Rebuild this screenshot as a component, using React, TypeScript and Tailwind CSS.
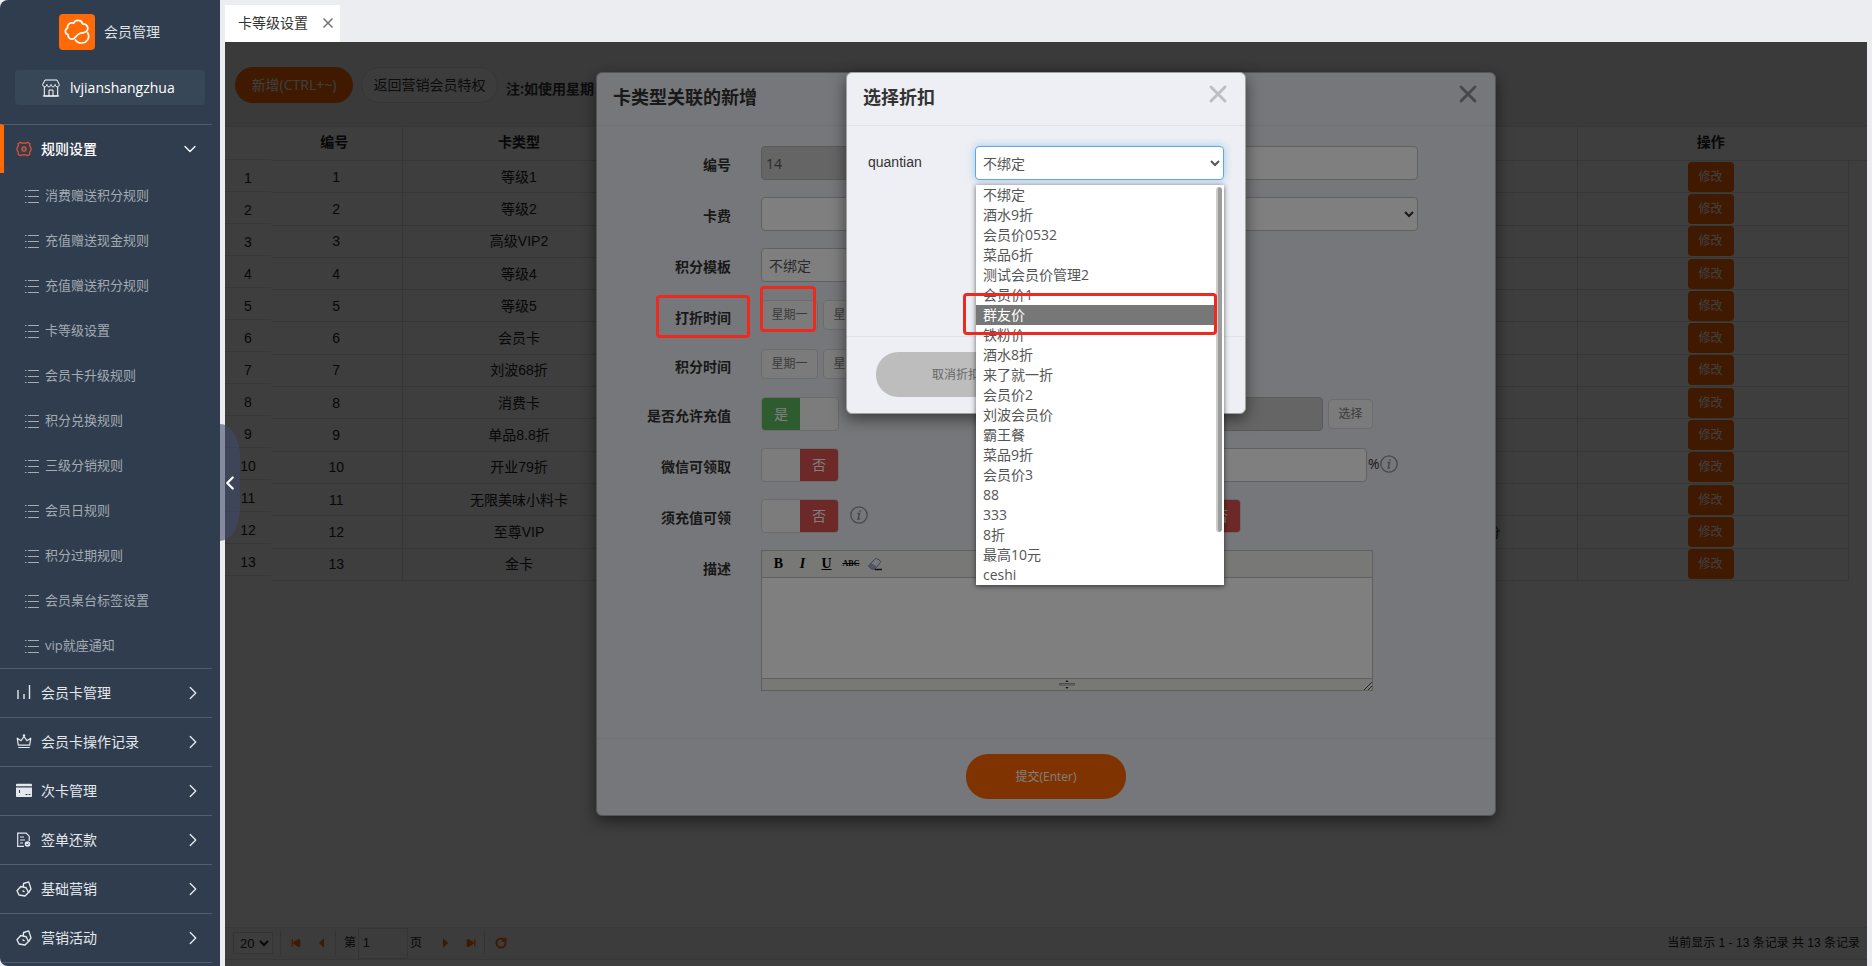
import React from "react";
import { X, ChevronRight, ChevronDown, ChevronLeft, SkipBack, RotateCw } from "lucide-react";

const ui = "font-['Open_Sans','Noto_Sans_CJK_SC',sans-serif]";
const arial = "font-['Liberation_Sans','Noto_Sans_CJK_SC',sans-serif]";

const ruleItems = [
  "消费赠送积分规则",
  "充值赠送现金规则",
  "充值赠送积分规则",
  "卡等级设置",
  "会员卡升级规则",
  "积分兑换规则",
  "三级分销规则",
  "会员日规则",
  "积分过期规则",
  "会员桌台标签设置",
  "vip就座通知",
];

const cardTypes = [
  "等级1",
  "等级2",
  "高级VIP2",
  "等级4",
  "等级5",
  "会员卡",
  "刘波68折",
  "消费卡",
  "单品8.8折",
  "开业79折",
  "无限美味小料卡",
  "至尊VIP",
  "金卡",
];

const discounts = [
  "不绑定",
  "酒水9折",
  "会员价0532",
  "菜品6折",
  "测试会员价管理2",
  "会员价1",
  "群友价",
  "铁粉价",
  "酒水8折",
  "来了就一折",
  "会员价2",
  "刘波会员价",
  "霸王餐",
  "菜品9折",
  "会员价3",
  "88",
  "333",
  "8折",
  "最高10元",
  "ceshi",
];

const weekdays = ["星期一", "星期二", "星期三", "星期四", "星期五", "星期六", "星期日"];

function ListIcon() {
  return (
    <svg width="14" height="14" viewBox="0 0 14 14" fill="none" stroke="currentColor" className="shrink-0">
      <path d="M0 1.5h1.5M0 7.5h1.5M0 13.5h1.5M3 1.5h11M3 7.5h11M3 13.5h11" />
    </svg>
  );
}

function GearIcon() {
  return (
    <svg width="16" height="16" viewBox="0 0 16 16" fill="none" stroke="#e8552d" strokeWidth="1.2" strokeLinejoin="round">
      <path d="M4.300 1.300 6 2.200h4l1.700-.9 2.100 1.500-.1 1.900L15.300 8l-1.600 3.300.1 1.900-2.100 1.500-1.700-.9H6l-1.700.9-2.100-1.500.1-1.900L.7 8l1.600-3.300-.1-1.900z" />
      <circle cx="8" cy="8" r="2.100" />
      <path d="M8 7.500v1" />
    </svg>
  );
}

function BarsIcon() {
  return (
    <svg width="16" height="16" viewBox="0 0 16 16" fill="none" stroke="currentColor" strokeWidth="1.400">
      <path d="M2 5v9M8 9v5M13.500 0v14" />
    </svg>
  );
}

function CrownIcon() {
  return (
    <svg width="16" height="16" viewBox="0 0 16 16" fill="none" stroke="currentColor" strokeWidth="1.200" strokeLinejoin="round">
      <path d="M2.300 13.500h11.400M2.300 11.200 1.200 4.200l3.900 2.500L8 2.500l2.900 4.200 3.900-2.500-1.100 7z" />
      <circle cx="8" cy="1.500" r="1.200" fill="currentColor" stroke="none" />
    </svg>
  );
}

function CardIcon() {
  return (
    <svg width="16" height="16" viewBox="0 0 16 16" fill="currentColor">
      <path d="M0 2C0 1.300.4.800 1 .8h14c.6 0 1 .5 1 1.200v1.200H0zM0 4.500h16V13c0 .6-.4 1-1 1H1c-.6 0-1-.4-1-1z" />
      <path d="M3.500 7v3M9.500 11.500h2M12.500 11.500h2" stroke="#2f3d4e" />
    </svg>
  );
}

function DocIcon() {
  return (
    <svg width="16" height="16" viewBox="0 0 16 16" fill="none" stroke="currentColor" strokeWidth="1.200">
      <path d="M8 14.400H1.700V1.200h8.500l3 3V9M4 5h4M4 8h5M4 11h3" />
      <circle cx="11.500" cy="12" r="2.800" fill="currentColor" stroke="none" />
      <path d="m10.300 12 1 1 1.500-1.700" stroke="#2f3d4e" strokeWidth=".8" />
    </svg>
  );
}

function TagsIcon() {
  return (
    <svg width="16" height="16" viewBox="0 0 16 16" fill="none" stroke="currentColor" strokeWidth="1.400" strokeLinejoin="round">
      <path d="M1 9.800 4.800 5.500l5.400 1.300 2.300 4.700-3.500 3.500-6-1z" />
      <path d="M7.200 5.800 7.600 2.500 12.700.900l2.300 7-2.300 3.600" />
      <path d="m6.500 9.500 2 1.500" />
    </svg>
  );
}

function ShopIcon() {
  return (
    <svg width="18" height="18" viewBox="0 0 18 18" fill="none" stroke="currentColor" strokeWidth="1">
      <path d="M3 1h12l2.300 4.500c0 1.300-.9 2.300-2.100 2.300S13.100 6.800 13.100 5.500c0 1.300-.9 2.300-2.050 2.300S9 6.800 9 5.500c0 1.300-.9 2.300-2.050 2.300S4.900 6.800 4.900 5.500c0 1.300-.9 2.300-2.100 2.300S.7 6.800.7 5.500z" />
      <path d="M2.300 8v9h13.400V8M.8 17h16.400M7 17v-6h4v6" />
    </svg>
  );
}

function Logo() {
  return (
    <span className="flex size-9 items-center justify-center rounded bg-[#ff6a06]">
      <svg width="26" height="26" viewBox="0 0 26 26" fill="none" stroke="#fff" strokeWidth="1.700" strokeLinecap="round" strokeLinejoin="round">
        <path d="M10 19.500C7 21 3.500 19 4.300 15.800.8 15 .300 10.500 3.600 9 2.800 5.500 6.500 3 9.500 4.300 11.500.3 17.500.5 18.500 4.800c4.800-.3 6.800 4.700 4 7.600-1.800 1.900-4.500 1-6.800 2.100-2.500 1.200-3.500 3-5.700 5z" />
        <path d="M23.800 14c2.500 5-1 10-6.300 10-3.200 0-5-1.200-6-3" />
      </svg>
    </span>
  );
}

const groups = [
  { name: "会员卡管理", icon: <BarsIcon /> },
  { name: "会员卡操作记录", icon: <CrownIcon /> },
  { name: "次卡管理", icon: <CardIcon /> },
  { name: "签单还款", icon: <DocIcon /> },
  { name: "基础营销", icon: <TagsIcon /> },
  { name: "营销活动", icon: <TagsIcon /> },
];

function Sidebar() {
  return (
    <aside className={`${ui} flex w-[220px] shrink-0 flex-col overflow-hidden rounded-l-lg bg-[#2f3d4e] text-sm text-[#e4e8ec]`}>
      <div className="flex h-[63px] shrink-0 items-center gap-[9px] pl-[59px]">
        <Logo />
        <span className="text-[#dfe3e8]">会员管理</span>
      </div>
      <button className="mx-[15px] mt-[7px] mb-[19px] flex h-[35px] shrink-0 items-center gap-[10px] rounded-sm bg-[#384757] pl-[27px] text-white">
        <ShopIcon />
        lvjianshangzhua
      </button>
      <nav className="flex flex-col">
        <a href="#rules" className="mr-2 flex h-[49px] items-center border-t border-l-4 border-t-[#4d5f70] border-l-[#ff6a06] pl-3 font-medium text-white">
          <GearIcon />
          <span className="ml-[9px] flex-1">规则设置</span>
          <ChevronDown size={20} strokeWidth={1.5} className="mr-3" />
        </a>
        {ruleItems.map((item) => (
          <a key={item} href="#item" className="flex h-[45px] items-center gap-[6px] pl-[25px] text-[13px] text-[#a3abb3]">
            <ListIcon />
            {item}
          </a>
        ))}
        {groups.map((g) => (
          <a key={g.name} href="#group" className="mr-2 flex h-[49px] items-center border-t border-[#4d5f70] pl-4">
            {g.icon}
            <span className="ml-[9px] flex-1">{g.name}</span>
            <ChevronRight size={22} strokeWidth={1.5} className="mr-2" />
          </a>
        ))}
        <div className="mr-2 border-t border-[#4d5f70]" />
      </nav>
    </aside>
  );
}

function CardTable() {
  return (
    <div className="flex items-start">
      <div className="w-[46px] shrink-0 text-center">
        <div className="h-[34px] border-y border-[#dadada]" />
        {cardTypes.map((_, i) => (
          <div key={i} className="h-8 border-b border-[#dadada] pt-[6px] leading-[24px]">
            {i + 1}
          </div>
        ))}
      </div>
      <table className="h-[455px] flex-1 table-fixed border-collapse text-center">
        <colgroup>
          <col className="w-[131px]" />
          <col className="w-[234px]" />
          <col />
          <col className="w-[271px]" />
          <col className="w-[19px]" />
        </colgroup>
        <thead>
          <tr className="h-[34px] border-y border-[#dadada]">
            <th className="border-r border-[#dadada] pr-1 pb-1">编号</th>
            <th className="border-r border-[#dadada] pb-1">卡类型</th>
            <th className="border-r border-[#dadada]" />
            <th className="pr-1 pb-1">操作</th>
            <th />
          </tr>
        </thead>
        <tbody>
          {cardTypes.map((name, i) => (
            <tr key={name}>
              <td className="border-r border-b border-[#dadada]">{i + 1}</td>
              <td className="border-r border-b border-[#dadada]">{name}</td>
              <td className="border-r border-b border-[#dadada] pr-[76px] text-right">{i === 11 ? "积分" : ""}</td>
              <td className="border-r border-b border-[#dadada] pr-1">
                <button className="mx-auto block h-[30px] w-[46px] rounded-sm bg-[#ff6600] text-xs text-white">修改</button>
              </td>
              <td />
            </tr>
          ))}
        </tbody>
      </table>
    </div>
  );
}

function Pager() {
  const sep = "h-6 w-px bg-[#d0d0d0]";
  const tri = "size-[10px] fill-[#ff6600] text-[#ff6600]";
  return (
    <div className="mb-[6px] flex h-[33px] items-center border-y border-[#dedede] bg-[#f0f0f0] pr-[7px] pb-px pl-2 text-xs">
      <select aria-label="每页条数" className="h-[22px] w-10 rounded-none border border-[#d0d0d0] bg-[#f6f6f6] pl-[2px] text-[13px] leading-none">
        <option>20</option>
      </select>
      <span className={`${sep} ml-[7px]`} />
      <button aria-label="首页" className="ml-[10px]"><SkipBack className={tri} strokeWidth={3} /></button>
      <button aria-label="上一页" className="ml-4">
        <svg className={tri} viewBox="0 0 10 10"><path d="M7 0v10L2 5z" /></svg>
      </button>
      <span className={`${sep} ml-2`} />
      <label htmlFor="page" className="ml-2">第</label>
      <input id="page" defaultValue="1" className="ml-[2px] h-[31px] w-[50px] border border-[#d0d0d0] px-1" />
      <span className="ml-[2px]">页</span>
      <button aria-label="下一页" className="ml-[18px]">
        <svg className={tri} viewBox="0 0 10 10"><path d="M3 0v10l5-5z" /></svg>
      </button>
      <button aria-label="末页" className="ml-4"><SkipBack className={`${tri} rotate-180`} strokeWidth={3} /></button>
      <span className={`${sep} ml-2`} />
      <button aria-label="刷新" className="ml-[10px] text-[#ff6600]"><RotateCw size={12} strokeWidth={4} /></button>
      <span className="ml-auto">当前显示 1 - 13 条记录 共 13 条记录</span>
    </div>
  );
}

function Row({ label, id, tall = true, children }: { label: string; id?: string; tall?: boolean; children: React.ReactNode }) {
  return (
    <div className={`flex items-start ${tall ? "min-h-[51px]" : "min-h-[49px]"}`}>
      <label htmlFor={id} className="w-[134px] shrink-0 pt-[9px] text-right font-bold leading-5">
        {label}
      </label>
      <div className="ml-[30px] flex flex-1 items-start">{children}</div>
    </div>
  );
}

function Switch({ id, on, label }: { id: string; on?: boolean; label: string }) {
  return (
    <label className="flex h-[34px] w-[78px] overflow-hidden rounded border border-[#d6d6d6] bg-[#f8f8f8] text-white leading-8">
      <input id={id} type="checkbox" role="switch" defaultChecked={on} aria-label={label} className="sr-only" />
      {on ? (
        <span className="w-[38px] bg-[#5cb85c] text-center">是</span>
      ) : (
        <span className="ml-[38px] w-[38px] bg-[#d9534f] text-center">否</span>
      )}
    </label>
  );
}

function Info() {
  return (
    <svg width="18" height="18" viewBox="0 0 18 18" fill="none" stroke="#8f9093" strokeWidth="1.300">
      <circle cx="9" cy="9" r="8.200" />
      <path d="M10.200 4.200v1.500M7.400 7.500h2.200l-1.500 5.500h2" strokeWidth="1.500" />
    </svg>
  );
}

const field = "h-[34px] rounded border border-[#c2c2c2] bg-white";

function WeekRow() {
  return (
    <div className="flex gap-[5px] pt-px">
      {weekdays.map((d) => (
        <button key={d} className="h-[30px] w-[57px] rounded-sm border border-[#d8d8d8] bg-[#f6f6f6] text-xs text-[#777]">
          {d}
        </button>
      ))}
    </div>
  );
}

function Editor() {
  return (
    <div className="w-[612px] border border-[#bcc0bc]">
      <div className="flex h-[27px] items-center border-b border-[#bcc0bc] bg-[#f0f0ee] pl-2 font-['Liberation_Serif',serif] text-black">
        <button aria-label="粗体" className="w-[17px] text-sm font-bold">B</button>
        <button aria-label="斜体" className="ml-[7px] w-[17px] text-sm font-bold italic">I</button>
        <button aria-label="下划线" className="ml-[7px] w-[17px] text-sm font-bold underline">U</button>
        <button aria-label="删除线" className="ml-[7px] w-[18px] text-[8px] font-bold line-through">ABC</button>
        <button aria-label="清除格式" className="ml-[7px]">
          <svg width="16" height="14" viewBox="0 0 16 14" fill="none" stroke="#7c86ac" strokeLinejoin="round">
            <path d="m1.500 9 6-6.500c1-1 2-1 3-.5l2.500 1.500c.8.5.8 1.500 0 2.500l-5 6H4.500z" fill="#f0f3fb" />
            <path d="M1.500 9 4 6.500 8.500 9 8 12H4.500z" fill="#a4acc8" strokeWidth=".5" />
            <path d="M8 12.500h7" stroke="#222" strokeWidth="1.500" />
          </svg>
        </button>
      </div>
      <textarea id="desc" className="block h-[100px] w-full resize-none bg-white" />
      <div className="relative flex h-3 items-center justify-center border-t border-[#bcc0bc] bg-[#f0f0ee]">
        <svg width="16" height="9" viewBox="0 0 16 9" fill="#222">
          <path d="m8 0 1.500 2h-3zM8 9 6.500 7h3z" />
          <path d="M.5 3.500h15v1.500H.5z" fill="none" stroke="#777" strokeWidth=".7" />
        </svg>
        <svg width="8" height="8" viewBox="0 0 8 8" stroke="#555" className="absolute right-0 bottom-0">
          <path d="m0 8 8-8M4 8l4-4" />
        </svg>
      </div>
    </div>
  );
}

function CardTypeDialog() {
  return (
    <div role="dialog" aria-label="卡类型关联的新增" className="flex w-[900px] flex-col rounded-md border border-[#a8a8a8] bg-[#edeff4] text-[#333] shadow-[0_5px_15px_rgba(0,0,0,0.5)]">
      <div className="flex h-[53px] items-center justify-between border-b border-[#e2e3e7] pr-[13px] pl-4">
        <h2 className={`${ui} pb-[5px] text-lg font-bold`}>卡类型关联的新增</h2>
        <button aria-label="关闭" className="pb-[10px] text-[#8f9093]"><X size={28} strokeWidth={2.500} /></button>
      </div>
      <div className={`${ui} h-[612px] pt-5 text-sm`}>
        <Row label="编号" id="no">
          <input id="no" readOnly defaultValue="14" className="h-[34px] w-[255px] rounded border border-[#b4b4b4] bg-[#cbcbcb] px-1 text-[#555]" />
          <input aria-label="名称" className={`${field} ml-[147px] w-[255px]`} />
        </Row>
        <Row label="卡费" id="fee">
          <input id="fee" className={`${field} w-[255px]`} />
          <select aria-label="类型" className={`${field} ml-[147px] w-[255px]`} />
        </Row>
        <Row label="积分模板" id="tpl">
          <select id="tpl" className={`${field} w-[255px] pl-[3px] text-[#555]`}>
            <option>不绑定</option>
          </select>
        </Row>
        <Row label="打折时间" tall={false}><WeekRow /></Row>
        <Row label="积分时间" tall={false}><WeekRow /></Row>
        <Row label="是否允许充值" id="recharge">
          <Switch id="recharge" on label="是否允许充值" />
          <input aria-label="折扣" readOnly className="ml-[324px] h-[34px] w-[160px] rounded border border-[#b4b4b4] bg-[#cbcbcb]" />
          <button className="mt-[2px] ml-[5px] h-[30px] w-[45px] rounded-sm border border-[#d8d8d8] bg-[#f6f6f6] text-xs text-[#777]">选择</button>
        </Row>
        <Row label="微信可领取" id="wechat">
          <Switch id="wechat" label="微信可领取" />
          <input aria-label="比例" className={`${field} ml-[324px] w-[204px]`} />
          <span className={`${ui} mt-[7px] flex items-center pl-px leading-[18px]`}>%<Info /></span>
        </Row>
        <Row label="须充值可领" id="must">
          <Switch id="must" label="须充值可领" />
          <span className="mt-[7px] ml-[11px]"><Info /></span>
          <span className="ml-[295px]"><Switch id="extra" label="开关" /></span>
        </Row>
        <Row label="描述" id="desc"><Editor /></Row>
      </div>
      <div className={`${ui} flex justify-center border-t border-[#e2e3e7] pt-[15px] pb-4`}>
        <button className="h-[45px] w-[160px] rounded-[22px] bg-[#ff6600] text-xs text-white">提交(Enter)</button>
      </div>
    </div>
  );
}

function DiscountDialog() {
  return (
    <div role="dialog" aria-label="选择折扣" className="flex w-[400px] flex-col rounded-md border border-[#a0a0a0] bg-[#edeff4] text-[#333] shadow-[0_5px_15px_rgba(0,0,0,0.5)]">
      <div className="flex h-[53px] items-center justify-between border-b border-[#e2e3e7] pr-[13px] pl-4">
        <h2 className={`${ui} pb-[5px] text-lg font-bold`}>选择折扣</h2>
        <button aria-label="关闭" className="pb-[10px] text-[#bdbec1]"><X size={28} strokeWidth={2.500} /></button>
      </div>
      <div className="flex h-[210px] items-start pt-5 pr-[21px] pl-[21px]">
        <label htmlFor="discount" className={`${arial} w-[107px] shrink-0 pt-[6px] text-sm leading-5`}>quantian</label>
        <div className={`${ui} relative flex-1 text-sm`}>
          <select id="discount" className="block h-[34px] w-full rounded border border-[#66a5d9] bg-white pl-[3px] text-[#555] shadow-[0_0_8px_rgba(102,175,233,0.6)]">
            <option>不绑定</option>
          </select>
          <ul role="listbox" aria-label="折扣选项" className="absolute top-[39px] right-0 left-px z-10 bg-white text-[#555] shadow-[0_1px_5px_rgba(0,0,0,0.6)]">
            {discounts.map((d) => (
              <li
                key={d}
                role="option"
                aria-selected={d === "群友价"}
                className={d === "群友价" ? "mr-2 h-5 bg-[#777] pl-[7px] leading-5 text-white" : "mr-2 h-5 pl-[7px] leading-5"}
              >
                {d}
              </li>
            ))}
            <li aria-hidden="true" className="absolute top-[2px] right-[2px] h-[345px] w-[6px] rounded-[3px] border-l-2 border-[#ccc] bg-[#9c9c9c]" />
            <li aria-hidden="true" className="absolute top-[108px] right-[7px] -left-[13px] h-[42px] rounded-sm border-[3px] border-[#ec2a20]" />
          </ul>
        </div>
      </div>
      <div className={`${ui} border-t border-[#e2e3e7] px-[29px] pt-[15px] pb-4`}>
        <button className="block h-[45px] w-[160px] rounded-[22px] bg-[#bdbdbd] text-xs text-[#666]">取消折扣</button>
      </div>
    </div>
  );
}

export default function App() {
  return (
    <div className="flex h-screen overflow-hidden bg-[#ecedf1]">
      <Sidebar />
      <main className="relative mr-[5px] ml-[5px] flex min-w-0 flex-1 flex-col">
        <header className="flex h-[42px] shrink-0 items-end">
          <div className={`${ui} flex h-[37px] w-[115px] items-center bg-white pb-px pl-[13px] text-sm text-[#333]`}>
            卡等级设置
            <button aria-label="关闭标签" className="ml-3 text-[#777]"><X size={16} strokeWidth={2.500} /></button>
          </div>
        </header>
        <div className="relative flex flex-1 flex-col bg-[#f8f8f8]">
          <div className={`${ui} flex h-[84px] items-start gap-2 bg-[#ebebeb] pt-[25px] pl-[10px] text-sm text-[#333]`}>
            <button className="h-9 w-[118px] rounded-full bg-[#ff6600] text-white">新增(CTRL+~)</button>
            <button className="h-9 w-[137px] rounded-full border border-[#d6d6d6] bg-[#f0f0f0]">返回营销会员特权</button>
            <strong className="pt-3 leading-5">注:如使用星期</strong>
          </div>
          <div className={`${arial} flex flex-1 flex-col text-sm text-[#222]`}>
            <CardTable />
            <div className="flex-1" />
            <Pager />
          </div>
          <div className="absolute inset-0 flex items-start justify-center bg-black/50 pt-[30px]">
            <CardTypeDialog />
          </div>
          <div className="absolute inset-0 flex items-start justify-center bg-black/50">
            {/* Highlight frames share the dialog's box so they stay over its fields. */}
            <div className="relative flex w-[900px] justify-center pt-[30px]">
              <span className="absolute top-[253px] left-[60px] h-[43px] w-[94px] rounded-sm border-[3px] border-[#ec2a20]" />
              <span className="absolute top-[244px] left-[164px] h-[46px] w-[56px] rounded-sm border-[3px] border-[#ec2a20]" />
              <DiscountDialog />
            </div>
          </div>
        </div>
        <button aria-label="收起菜单" className="absolute top-[424px] -left-[5px] flex h-[117px] w-5 items-center justify-center rounded-r-[20px_32px] bg-[rgba(65,75,106,0.6)] text-white">
          <ChevronLeft size={22} strokeWidth={2.500} className="shrink-0" />
        </button>
      </main>
    </div>
  );
}
